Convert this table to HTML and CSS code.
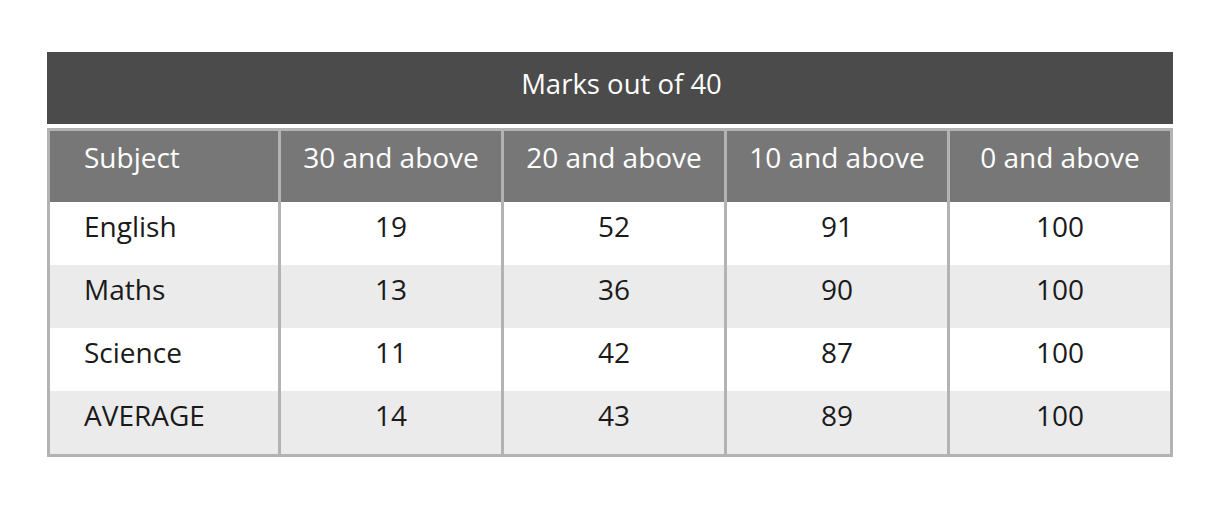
FILE: index.html
```html
<!DOCTYPE html>
<html lang="en">

<head>
    <meta charset="UTF-8">
    <meta name="viewport" content="width=device-width, initial-scale=1.0">
    <title>Marks out of 40</title>
    <link rel="stylesheet" href="styles.css">
</head>

<body>
    <div class="marks">
        <div class="marks-title">Marks out of 40</div>
        <table class="marks-table">
            <colgroup>
                <col class="subject-col">
                <col>
                <col>
                <col>
                <col>
            </colgroup>
            <tr>
                <th class="subject">Subject</th>
                <th>30 and above</th>
                <th>20 and above</th>
                <th>10 and above</th>
                <th>0 and above</th>
            </tr>
            <tr>
                <td class="subject">English</td>
                <td>19</td>
                <td>52</td>
                <td>91</td>
                <td>100</td>
            </tr>
            <tr>
                <td class="subject">Maths</td>
                <td>13</td>
                <td>36</td>
                <td>90</td>
                <td>100</td>
            </tr>
            <tr>
                <td class="subject">Science</td>
                <td>11</td>
                <td>42</td>
                <td>87</td>
                <td>100</td>
            </tr>
            <tr>
                <td class="subject">AVERAGE</td>
                <td>14</td>
                <td>43</td>
                <td>89</td>
                <td>100</td>
            </tr>
        </table>
    </div>
</body>

</html>
```

FILE: styles.css
```css
body {
    font-family: "Open Sans", Arial, sans-serif;
    margin: 0;
    background-color: white;
}

.marks {
    width: 1126px;
    margin-left: 47px;
    padding-top: 52px;
}

.marks-title {
    background-color: #4b4b4b;
    color: white;
    height: 72px;
    box-sizing: border-box;
    padding: 0 0 9px 23px;
    display: flex;
    align-items: center;
    justify-content: center;
    font-size: 27.5px;
    margin-bottom: 4px;
}

.marks-table {
    width: 100%;
    border-collapse: collapse;
    table-layout: fixed;
    border: 3px solid #b3b3b3;
}

.subject-col {
    width: 231px;
}

th,
td {
    border-left: 3px solid #b3b3b3;
    border-right: 3px solid #b3b3b3;
    text-align: center;
    font-size: 28px;
    font-weight: normal;
    line-height: 1;
    padding: 0;
}

th {
    background-color: #777777;
    color: white;
    height: 52px;
    padding-bottom: 19px;
}

td {
    color: #1a1a1a;
    height: 47px;
    padding-bottom: 16px;
}

tr:nth-child(odd) td {
    background-color: #ebebeb;
}

.subject {
    text-align: left;
    padding-left: 34px;
}
```
